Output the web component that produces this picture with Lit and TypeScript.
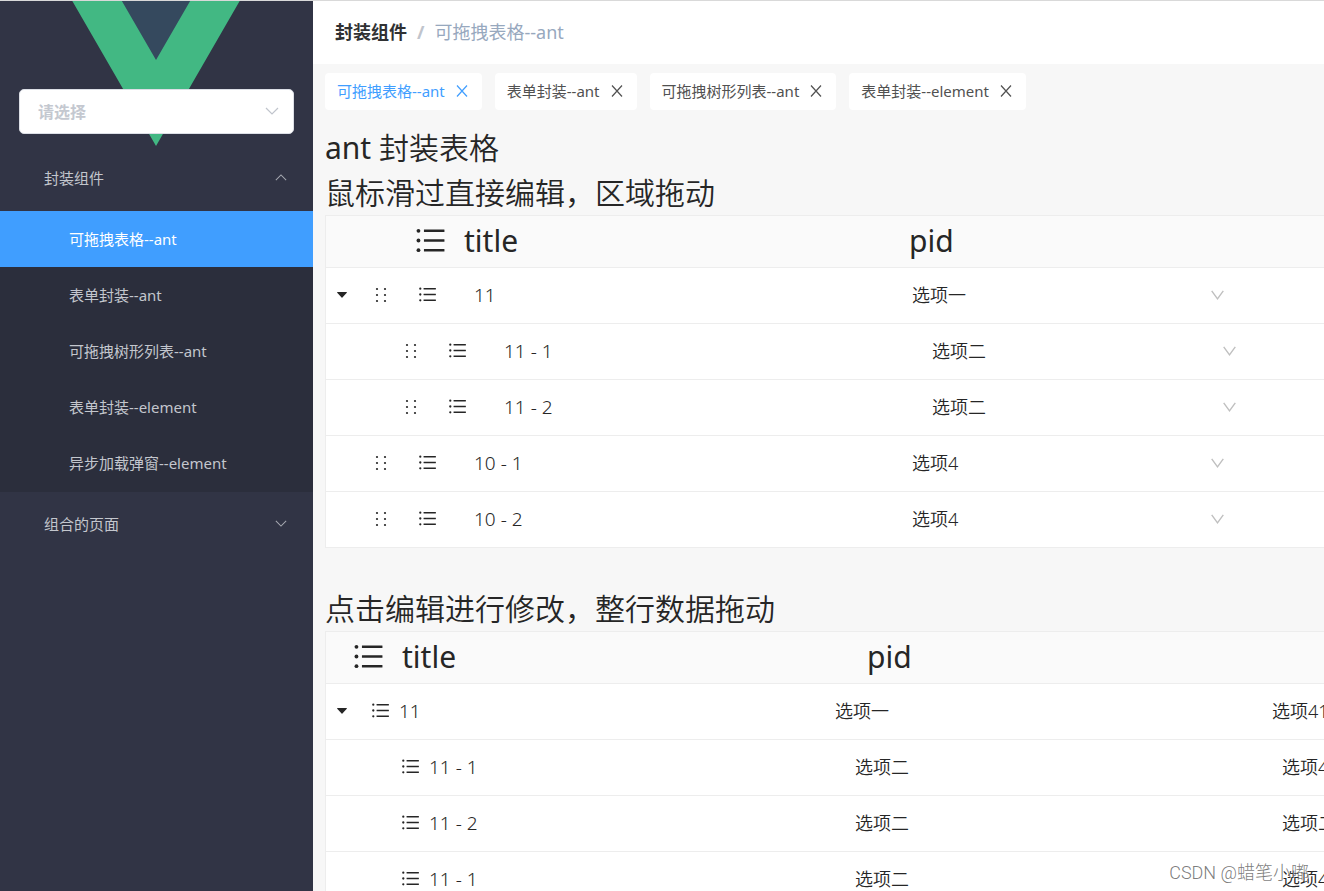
import { LitElement, html, svg, css, nothing } from "lit";
import { customElement, property, state } from "lit/decorators.js";
import { classMap } from "lit/directives/class-map.js";

const FONT = css`"Noto Sans", "Noto Sans CJK SC", sans-serif`;

const listIcon = (cls: string) => html`
  <svg class=${cls} viewBox="0 0 1024 1024" fill="currentColor" aria-hidden="true">
    ${[228, 512, 796].map(
      (y) => svg`<rect x="320" y=${y - 36} width="600" height="72" rx="8"></rect><circle cx="160" cy=${y} r="56"></circle>`
    )}
  </svg>`;

const dragIcon = html`
  <svg class="drag-icon" viewBox="0 0 14 16" fill="currentColor" aria-hidden="true">
    ${[2, 8, 14].map((y) => svg`<circle cx="3" cy=${y} r="1.1"></circle><circle cx="11" cy=${y} r="1.1"></circle>`)}
  </svg>`;

const caretIcon = html`
  <svg class="caret-icon" viewBox="0 0 10 6" fill="currentColor" aria-hidden="true">
    <path d="M.6 0h8.8c.5 0 .7.5.4.8L5.4 5.6c-.2.3-.6.3-.8 0L.2.8C-.1.5.1 0 .6 0z"></path>
  </svg>`;

const wideChevron = (cls: string, up = false) => html`
  <svg class=${cls} viewBox="0 0 14 8" fill="none" stroke="currentColor" stroke-width="1.2" aria-hidden="true">
    <path d=${up ? "M1 7l6-6 6 6" : "M1 1l6 6 6-6"}></path>
  </svg>`;

const deepChevron = html`
  <svg class="pick-arrow" viewBox="0 0 13 10" fill="none" stroke="currentColor" stroke-width="1.4" aria-hidden="true">
    <path d="M.7.8l5.8 8 5.8-8"></path>
  </svg>`;

const closeIcon = html`
  <svg class="close-icon" viewBox="0 0 12 12" fill="none" stroke="currentColor" stroke-width="1.2" aria-hidden="true">
    <path d="M1 .5l10 11M11 .5L1 11.5"></path>
  </svg>`;

interface Row {
  title: string;
  pid: string;
  extra?: string;
  child?: boolean;
  open?: boolean;
}

@customElement("side-menu")
export class SideMenu extends LitElement {
  @state() private active = 0;

  private links = [
    "可拖拽表格--ant",
    "表单封装--ant",
    "可拖拽树形列表--ant",
    "表单封装--element",
    "异步加载弹窗--element",
  ];

  static styles = css`
    :host {
      display: block;
      background: #313445;
      color: #c3c6cd;
      font: 15px/20px ${FONT};
    }
    .top {
      display: grid;
      grid-template-columns: 1fr;
      justify-items: center;
      align-items: start;
    }
    .logo {
      grid-area: 1 / 1;
      width: 248px;
      height: 145px;
      margin-right: 2px;
    }
    .picker {
      grid-area: 1 / 1;
      justify-self: stretch;
      display: grid;
      align-items: center;
      margin: 88px 19px 0;
      color: #c0c4cc;
    }
    .picker select {
      grid-area: 1 / 1;
      width: 100%;
      height: 45px;
      padding: 0 18px;
      appearance: none;
      background: #fff;
      border: 1px solid #dcdfe6;
      border-radius: 5px;
      font: 700 16px/24px ${FONT};
      color: #c4c8d0;
    }
    .picker-arrow {
      grid-area: 1 / 1;
      justify-self: end;
      width: 14px;
      height: 8px;
      margin: 0 15px 2px 0;
      pointer-events: none;
    }
    .group {
      display: flex;
      align-items: center;
      justify-content: space-between;
      width: 100%;
      height: 65px;
      padding: 0 26px 2px 44px;
      border: 0;
      background: none;
      color: inherit;
      font: inherit;
    }
    .arrow {
      width: 12px;
      height: 7px;
      color: #a5a8b0;
    }
    ul {
      margin: 0;
      padding: 0 0 1px;
      list-style: none;
      background: #2b2e3c;
    }
    a {
      display: flex;
      align-items: center;
      box-sizing: border-box;
      height: 56px;
      padding: 0 0 1px 69px;
      color: inherit;
      text-decoration: none;
    }
    a.active {
      background: #409eff;
      color: #fff;
    }
  `;

  render() {
    return html`
      <div class="top">
        <svg class="logo" viewBox="0 73.6 261.76 153.1" role="img" aria-label="Vue">
          <path fill="#42b883" d="M161.1 0l-30.2 52.3L100.6 0H0l130.9 226.7L261.7 0z"></path>
          <path fill="#35495e" d="M161.1 0l-30.2 52.3L100.6 0H52.3l78.6 136L209.4 0z"></path>
        </svg>
        <div class="picker">
          <select aria-label="请选择">
            <option>请选择</option>
          </select>
          ${wideChevron("picker-arrow")}
        </div>
      </div>
      <nav>
        <button class="group" aria-expanded="true">封装组件 ${wideChevron("arrow", true)}</button>
        <ul>
          ${this.links.map(
            (text, i) => html`<li>
              <a href="#" class=${classMap({ active: i === this.active })} @click=${() => (this.active = i)}>${text}</a>
            </li>`
          )}
        </ul>
        <button class="group" aria-expanded="false">组合的页面 ${wideChevron("arrow")}</button>
      </nav>
    `;
  }
}

@customElement("tree-table")
export class TreeTable extends LitElement {
  @property({ type: Boolean, reflect: true }) editable = false;
  @property({ attribute: false }) rows: Row[] = [];

  static styles = css`
    :host {
      display: block;
      overflow: hidden;
      color: #262626;
    }
    table {
      width: 100%;
      min-width: 1400px;
      table-layout: fixed;
      border: 1px solid #ededed;
      border-bottom-width: 0;
      border-spacing: 0;
      background: #fff;
      font: 18px/28px ${FONT};
    }
    .first {
      width: 493px;
    }
    .second {
      width: 437px;
    }
    :host([editable]) .first {
      width: 570px;
    }
    th,
    td {
      box-sizing: border-box;
      height: 56px;
      padding: 0 16px 2px;
      border-bottom: 1px solid #ededed;
      text-align: left;
    }
    th {
      height: 52px;
      padding: 0 0 2px 48px;
      background: #fafafa;
      font-size: 30px;
      line-height: 45px;
      font-weight: 400;
    }
    th.lead {
      padding-left: 25px;
    }
    :host([editable]) th {
      padding-left: 13px;
    }
    :host([editable]) th.lead {
      padding-left: 87px;
    }
    .head {
      display: flex;
      align-items: center;
      gap: 16px;
    }
    .head-icon {
      width: 35px;
      height: 35px;
    }
    td {
      font-weight: 350;
    }
    td.lead {
      padding: 0 0 2px 8px;
    }
    .child td.lead {
      padding-left: 38px;
    }
    .child td.pid {
      padding-left: 36px;
    }
    .child td.extra {
      padding-left: 26px;
    }
    .line {
      display: flex;
      align-items: center;
      font-size: 19px;
    }
    .slot {
      flex: none;
      display: flex;
      align-items: center;
      justify-content: flex-start;
      width: 36px;
      padding: 0;
      border: 0;
      background: none;
      color: inherit;
    }
    .slot.caret {
      padding-left: 3px;
      box-sizing: border-box;
    }
    .slot.list {
      width: 29px;
    }
    :host([editable]) .slot {
      width: 40px;
    }
    :host([editable]) .slot.drag {
      width: 43px;
    }
    :host([editable]) .slot.list {
      width: 57px;
    }
    .caret-icon {
      width: 10px;
      height: 6px;
    }
    .drag-icon {
      width: 14px;
      height: 16px;
    }
    .row-icon {
      width: 21px;
      height: 21px;
    }
    input,
    select {
      min-width: 0;
      padding: 0;
      border: 0;
      outline: 0;
      background: none;
      color: inherit;
      font: inherit;
      appearance: none;
    }
    input {
      flex: 1;
    }
    .pick {
      display: grid;
      align-items: center;
      width: 312px;
    }
    .child .pick {
      width: 304px;
    }
    .pick select {
      grid-area: 1 / 1;
      width: 100%;
    }
    .pick-arrow {
      grid-area: 1 / 1;
      justify-self: end;
      width: 13px;
      height: 10px;
      color: #bfbfbf;
      pointer-events: none;
    }
  `;

  private renderRow(row: Row) {
    return html`
      <tr class=${classMap({ child: !!row.child })}>
        <td class="lead">
          <div class="line">
            ${row.open
              ? html`<button class="slot caret" aria-label="收起" aria-expanded="true">${caretIcon}</button>`
              : html`<span class="slot"></span>`}
            ${this.editable ? html`<button class="slot drag" aria-label="拖动">${dragIcon}</button>` : nothing}
            <span class="slot list">${listIcon("row-icon")}</span>
            ${this.editable ? html`<input aria-label="title" .value=${row.title} />` : html`<span>${row.title}</span>`}
          </div>
        </td>
        <td class="pid">
          ${this.editable
            ? html`<div class="pick">
                <select aria-label="pid"><option>${row.pid}</option></select>${deepChevron}
              </div>`
            : row.pid}
        </td>
        <td class="extra">${row.extra ?? nothing}</td>
      </tr>
    `;
  }

  render() {
    return html`
      <table>
        <colgroup>
          <col class="first" />
          <col class="second" />
          <col />
        </colgroup>
        <thead>
          <tr>
            <th class="lead"><div class="head">${listIcon("head-icon")}<span>title</span></div></th>
            <th>pid</th>
            <th></th>
          </tr>
        </thead>
        <tbody>
          ${this.rows.map((row) => this.renderRow(row))}
        </tbody>
      </table>
    `;
  }
}

@customElement("app-root")
export class AppRoot extends LitElement {
  @state() private tab = 0;

  private tabs = ["可拖拽表格--ant", "表单封装--ant", "可拖拽树形列表--ant", "表单封装--element"];

  private editRows: Row[] = [
    { title: "11", pid: "选项一", open: true },
    { title: "11 - 1", pid: "选项二", child: true },
    { title: "11 - 2", pid: "选项二", child: true },
    { title: "10 - 1", pid: "选项4" },
    { title: "10 - 2", pid: "选项4" },
  ];

  private dragRows: Row[] = [
    { title: "11", pid: "选项一", extra: "选项41", open: true },
    { title: "11 - 1", pid: "选项二", extra: "选项4", child: true },
    { title: "11 - 2", pid: "选项二", extra: "选项二", child: true },
    { title: "11 - 1", pid: "选项二", extra: "选项4", child: true },
  ];

  static styles = css`
    :host {
      display: grid;
      grid-template-columns: 313px minmax(0, 1fr);
      box-sizing: border-box;
      height: 100vh;
      overflow: hidden;
      position: relative;
      border-top: 1px solid #d9d9d9;
      background: #f7f7f7;
      font: 15px/20px ${FONT};
    }
    .page {
      min-height: 0;
      overflow: hidden;
    }
    .crumbs {
      display: flex;
      align-items: center;
      gap: 10px;
      box-sizing: border-box;
      height: 63px;
      padding: 0 0 2px 22px;
      background: #fff;
      font-size: 18px;
      line-height: 28px;
      color: #97a8be;
    }
    .crumbs b {
      color: #303133;
    }
    .crumbs i {
      font-style: normal;
      font-weight: 700;
      color: #c0c4cc;
    }
    .tabs {
      display: flex;
      gap: 13px;
      padding: 9px 12px 15px;
    }
    .tab {
      display: flex;
      align-items: center;
      gap: 11px;
      box-sizing: border-box;
      height: 37px;
      padding: 0 14px 2px 12px;
      border-radius: 4px;
      background: #fff;
      color: #515151;
    }
    .tab.active {
      color: #409eff;
    }
    .tab button {
      padding: 0;
      border: 0;
      background: none;
      color: inherit;
      font: inherit;
    }
    .tab .close {
      display: flex;
    }
    .close-icon {
      width: 12px;
      height: 12px;
    }
    .content {
      padding-left: 12px;
    }
    h1,
    h2 {
      margin: 0;
      font-size: 30px;
      line-height: 45px;
      font-weight: 350;
      color: #262626;
    }
    .latin {
      font-weight: 400;
    }
    section + section {
      margin-top: 38px;
    }
    .mark {
      position: absolute;
      right: 15px;
      bottom: 5px;
      font: 300 18px/26px Roboto, "Noto Sans CJK SC", sans-serif;
      color: rgba(90, 90, 90, 0.8);
      text-shadow: 1px 1px 0 rgba(255, 255, 255, 0.8);
    }
  `;

  render() {
    return html`
      <side-menu></side-menu>
      <div class="page">
        <div class="crumbs"><b>封装组件</b><i>/</i><span>可拖拽表格--ant</span></div>
        <div class="tabs">
          ${this.tabs.map(
            (name, i) => html`<div class=${classMap({ tab: true, active: i === this.tab })}>
              <button @click=${() => (this.tab = i)}>${name}</button>
              <button class="close" aria-label="关闭">${closeIcon}</button>
            </div>`
          )}
        </div>
        <div class="content">
          <section>
            <h1><span class="latin">ant</span> 封装表格</h1>
            <h2>鼠标滑过直接编辑，区域拖动</h2>
            <tree-table editable .rows=${this.editRows}></tree-table>
          </section>
          <section>
            <h2>点击编辑进行修改，整行数据拖动</h2>
            <tree-table .rows=${this.dragRows}></tree-table>
          </section>
        </div>
      </div>
      <div class="mark">CSDN @蜡笔小嘟</div>
    `;
  }
}
